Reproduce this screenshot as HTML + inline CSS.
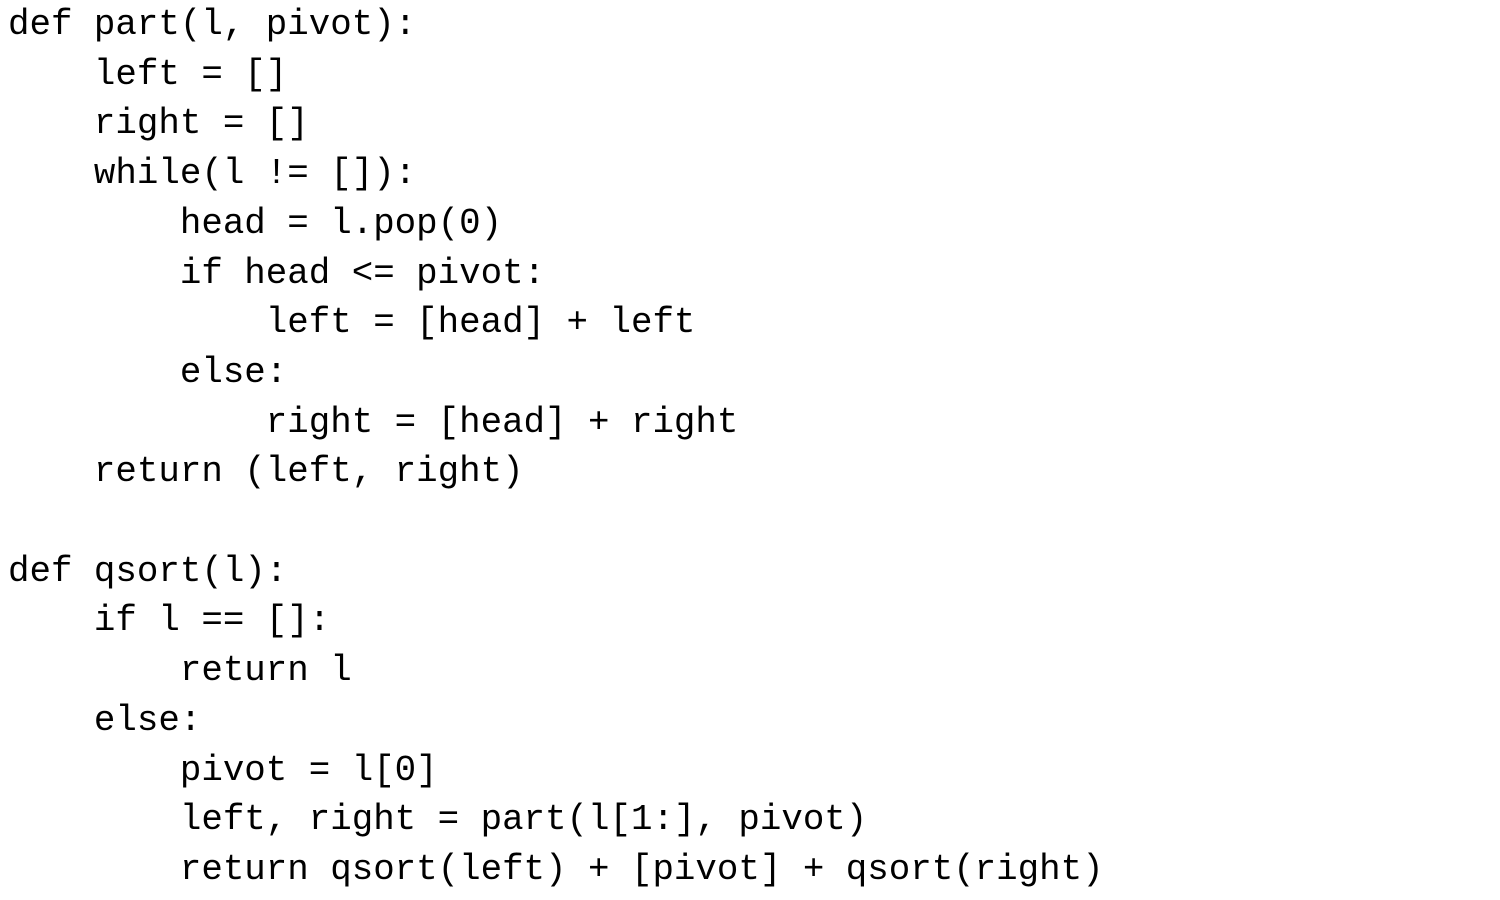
<!DOCTYPE html>
<html><head><meta charset="utf-8"><style>
html,body{margin:0;padding:0;background:#fff;width:1500px;height:900px;overflow:hidden}
pre{position:absolute;left:8px;top:0px;margin:0;font-family:"Liberation Mono",monospace;font-size:35.8px;line-height:49.7px;color:#000}
</style></head><body><pre>def part(l, pivot):
    left = []
    right = []
    while(l != []):
        head = l.pop(0)
        if head &lt;= pivot:
            left = [head] + left
        else:
            right = [head] + right
    return (left, right)

def qsort(l):
    if l == []:
        return l
    else:
        pivot = l[0]
        left, right = part(l[1:], pivot)
        return qsort(left) + [pivot] + qsort(right)</pre></body></html>
